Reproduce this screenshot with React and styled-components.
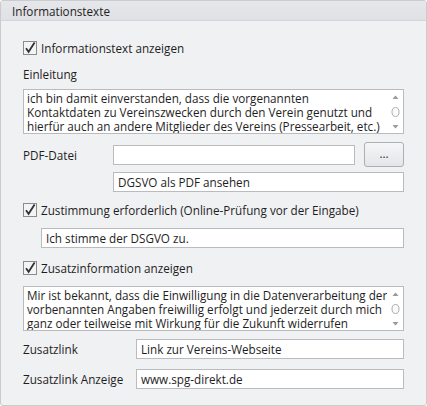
import React from 'react';
import styled, { createGlobalStyle } from 'styled-components';

const GlobalStyle = createGlobalStyle`
  html, body {
    margin: 0;
    padding: 0;
    background: #ffffff;
  }
  body {
    font-family: 'Open Sans', 'Liberation Sans', sans-serif;
    font-size: 11.7px;
    color: #1e1e1e;
  }
`;

function CheckIcon() {
  return (
    <svg width='14' height='14' viewBox='0 0 14 14'>
      <rect x='0.5' y='0.5' width='13' height='13' fill='#f4f4f4' stroke='#8c8c8c' />
      <path d='M3 7.2 L5.6 10.8 L11.6 1.6' fill='none' stroke='#333' strokeWidth='1.8' />
    </svg>
  );
}

function Scroller() {
  return (
    <Scroll>
      <svg width='9' height='40' viewBox='0 0 9 40'>
        <path d='M1.5 7 L4.5 3.5 L7.5 7 Z' fill='#9a9a9a' />
        <ellipse cx='4.5' cy='20' rx='3.5' ry='4.5' fill='#fafafa' stroke='#b0b0b0' />
        <path d='M1.5 33 L4.5 36.5 L7.5 33 Z' fill='#9a9a9a' />
      </svg>
    </Scroll>
  );
}

const intro = [
  'ich bin damit einverstanden, dass die vorgenannten',
  'Kontaktdaten zu Vereinszwecken durch den Verein genutzt und',
  'hierfür auch an andere Mitglieder des Vereins (Pressearbeit, etc.)',
];
const extra = [
  'Mir ist bekannt, dass die Einwilligung in die Datenverarbeitung der',
  'vorbenannten Angaben freiwillig erfolgt und jederzeit durch mich',
  'ganz oder teilweise mit Wirkung für die Zukunft widerrufen',
];

export default function App() {
  return (
    <>
      <GlobalStyle />
      <Panel>
        <Header>Informationstexte</Header>
        <Body>
          <Check top={19}>
            <CheckIcon />
            <span>Informationstext anzeigen</span>
          </Check>
          <Caption>Einleitung</Caption>
          <Memo top={7}>
            <MemoText>
              {intro.map((line) => (
                <Line key={line}>{line}</Line>
              ))}
            </MemoText>
            <Scroller />
          </Memo>
          <FieldRow top={8}>
            <Label width={90}>PDF-Datei</Label>
            <Field />
            <DotsButton>...</DotsButton>
          </FieldRow>
          <Indent left={90} top={5}>
            <Field as='div'>DGSVO als PDF ansehen</Field>
          </Indent>
          <Check top={10}>
            <CheckIcon />
            <span>Zustimmung erforderlich (Online-Prüfung vor der Eingabe)</span>
          </Check>
          <Indent left={18} top={10}>
            <Field as='div'>Ich stimme der DSGVO zu.</Field>
          </Indent>
          <Check top={12}>
            <CheckIcon />
            <span>Zusatzinformation anzeigen</span>
          </Check>
          <Memo top={10}>
            <MemoText>
              {extra.map((line) => (
                <Line key={line}>{line}</Line>
              ))}
            </MemoText>
            <Scroller />
          </Memo>
          <FieldRow top={8}>
            <Label width={113}>Zusatzlink</Label>
            <Field as='div'>Link zur Vereins-Webseite</Field>
          </FieldRow>
          <FieldRow top={10}>
            <Label width={113}>Zusatzlink Anzeige</Label>
            <Field as='div'>www.spg-direkt.de</Field>
          </FieldRow>
        </Body>
      </Panel>
    </>
  );
}

const Panel = styled.div`
  width: 427px;
  height: 406px;
  box-sizing: border-box;
  border: 1px solid #c9cbcf;
  border-radius: 3px;
  background: #f0f1f3;
  display: flex;
  flex-direction: column;
  overflow: hidden;
`;
const Header = styled.div`
  height: 20px;
  flex: none;
  box-sizing: border-box;
  padding: 2px 0 0 11px;
  background: linear-gradient(#e6e7ea, #dfe1e4);
  border-bottom: 1px solid #d3d5d9;
  line-height: 16px;
`;
const Body = styled.div`
  display: flex;
  flex-direction: column;
  padding: 0 22px;
`;
const Check = styled.label`
  display: flex;
  align-items: center;
  gap: 4px;
  height: 16px;
  margin-top: ${({ top }) => top}px;
  line-height: 16px;
  white-space: nowrap;
  svg {
    flex: none;
  }
`;
const Caption = styled.div`
  margin-top: 10px;
  line-height: 16px;
  height: 16px;
`;
const Memo = styled.div`
  margin-top: ${({ top }) => top}px;
  height: 45px;
  box-sizing: border-box;
  border: 1px solid #b9bbbf;
  background: #fff;
  display: flex;
`;
const MemoText = styled.div`
  flex: 1;
  min-width: 0;
  padding: 1px 3px;
  line-height: 14px;
  overflow: hidden;
`;
const Line = styled.div`
  white-space: nowrap;
`;
const Scroll = styled.div`
  width: 16px;
  flex: none;
  display: flex;
  justify-content: center;
  align-items: center;
`;
const FieldRow = styled.div`
  display: flex;
  align-items: center;
  gap: 9px;
  margin-top: ${({ top }) => top}px;
  & > :nth-child(2) {
    flex: 1;
  }
`;
const Label = styled.div`
  width: ${({ width }) => width}px;
  margin-right: -9px;
  flex: none;
  line-height: 16px;
  white-space: nowrap;
`;
const Field = styled.input`
  height: 20px;
  box-sizing: border-box;
  border: 1px solid #b9bbbf;
  background: #fff;
  padding: 0 4px;
  font: inherit;
  line-height: 18px;
  min-width: 0;
  outline: none;
  white-space: nowrap;
`;
const Indent = styled.div`
  display: flex;
  flex-direction: column;
  margin-left: ${({ left }) => left}px;
  margin-top: ${({ top }) => top}px;
`;
const DotsButton = styled.button`
  width: 40px;
  height: 25px;
  flex: none;
  box-sizing: border-box;
  border: 1px solid #adafb3;
  border-radius: 3px;
  background: linear-gradient(#f5f6f7, #e3e5e8);
  font: inherit;
  color: #333;
  padding: 0 0 4px;
`;
